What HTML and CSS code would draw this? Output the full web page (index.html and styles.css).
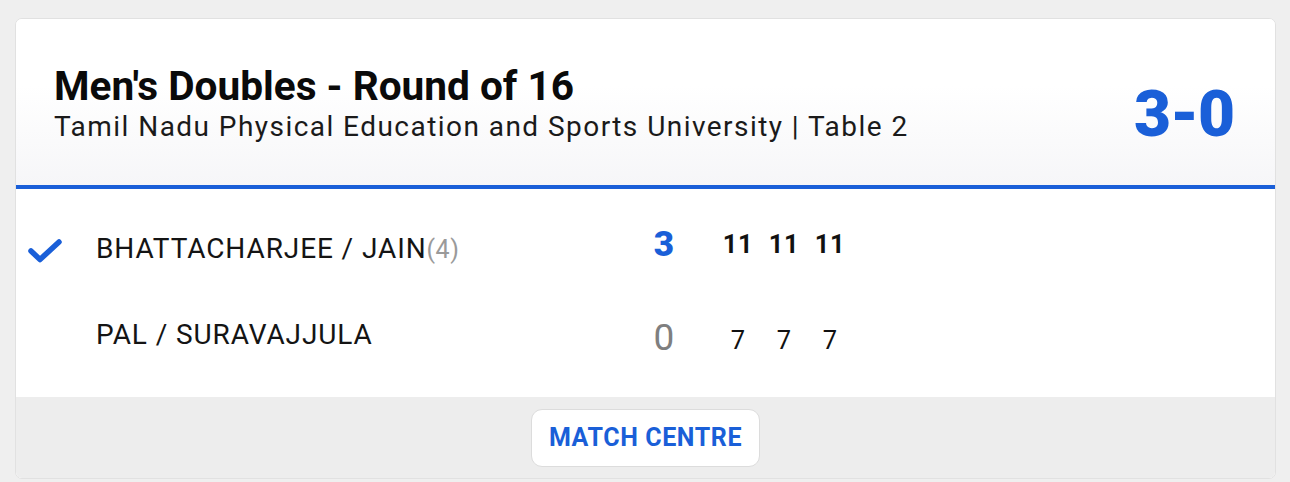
FILE: index.html
```html
<!DOCTYPE html>
<html>
<head>
<meta charset="utf-8">
<link rel="stylesheet" href="styles.css">
</head>
<body>
<div class="card">
  <div class="header">
    <div class="titles">
      <div class="title">Men's Doubles - Round of 16</div>
      <div class="subtitle">Tamil Nadu Physical Education and Sports University | Table 2</div>
    </div>
    <div class="final">3-0</div>
  </div>
  <div class="rows">
    <div class="row">
      <div class="mark">
        <svg width="38" height="28" viewBox="0 0 38 28"><path d="M5 14 L14 22.5 L33 5" fill="none" stroke="#1a5fd8" stroke-width="5.5" stroke-linecap="round" stroke-linejoin="round"/></svg>
      </div>
      <div class="name">BHATTACHARJEE / JAIN<span class="seed">(4)</span></div>
      <div class="total win">3</div>
      <div class="games up">
        <div class="game bold">11</div>
        <div class="game bold">11</div>
        <div class="game bold">11</div>
      </div>
    </div>
    <div class="row">
      <div class="mark"></div>
      <div class="name">PAL / SURAVAJJULA</div>
      <div class="total lose">0</div>
      <div class="games down">
        <div class="game">7</div>
        <div class="game">7</div>
        <div class="game">7</div>
      </div>
    </div>
  </div>
  <div class="footer">
    <div class="button">MATCH CENTRE</div>
  </div>
</div>
</body>
</html>
```
FILE: styles.css
```css
* { box-sizing: border-box; }
html, body { margin: 0; }
body {
  background: #efefef;
  padding: 18px 14px 0 15px;
  font-family: Roboto, "Liberation Sans", sans-serif;
  color: #111;
}
.card {
  width: 1261px;
  height: 461px;
  background: #fff;
  border: 1px solid #e1e1e1;
  border-radius: 7px;
  overflow: hidden;
  display: flex;
  flex-direction: column;
}
.header {
  height: 170px;
  flex: none;
  display: flex;
  align-items: center;
  justify-content: space-between;
  padding: 0 41px 0 38px;
  background: linear-gradient(#ffffff 0%, #ffffff 40%, #f6f6f8 100%);
  border-bottom: 4px solid #1a5fd8;
}
.titles { margin-top: 5px; }
.title {
  font-size: 40.6px;
  font-weight: 700;
  line-height: 44px;
  color: #0a0a0a;
}
.subtitle {
  font-size: 28px;
  line-height: 37px;
  color: #1a1a1a;
  letter-spacing: 1.45px;
}
.final {
  font-size: 64px;
  font-weight: 900;
  color: #1a5fd8;
  margin-top: 24px;
  letter-spacing: -1px;
}
.rows {
  flex: 1;
  padding-top: 16px;
  background: #fff;
}
.row {
  height: 86px;
  display: flex;
  align-items: center;
}
.mark {
  width: 80px;
  padding-left: 10px;
  display: flex;
  align-items: center;
}
.mark svg { display: block; margin-top: 6px; }
.name {
  width: 540px;
  font-size: 28px;
  letter-spacing: 0.9px;
  color: #141414;
}
.seed { color: #9a9a9a; font-size: 25px; letter-spacing: 0.5px; }
.total {
  width: 56px;
  text-align: center;
  font-size: 37px;
}
.total.win { color: #1a5fd8; font-weight: 900; font-size: 35px; margin-top: -8px; }
.total.lose { color: #7f7f7f; font-weight: 400; margin-top: 6px; }
.games {
  display: flex;
  margin-left: 23px;
}
.games.up { margin-top: -8px; }
.games.down { margin-top: 12px; }
.game {
  width: 46px;
  text-align: center;
  font-size: 25.5px;
  color: #111;
}
.game.bold { font-weight: 700; letter-spacing: 0.5px; }
.footer {
  height: 81px;
  flex: none;
  background: #ededed;
  display: flex;
  justify-content: center;
  align-items: center;
}
.button {
  width: 229px;
  height: 58px;
  background: #fff;
  border: 1px solid #dcdcdc;
  border-radius: 11px;
  display: flex;
  align-items: center;
  justify-content: center;
  color: #1a5fd8;
  font-weight: 700;
  font-size: 25px;
  letter-spacing: 0.6px;
}
```
